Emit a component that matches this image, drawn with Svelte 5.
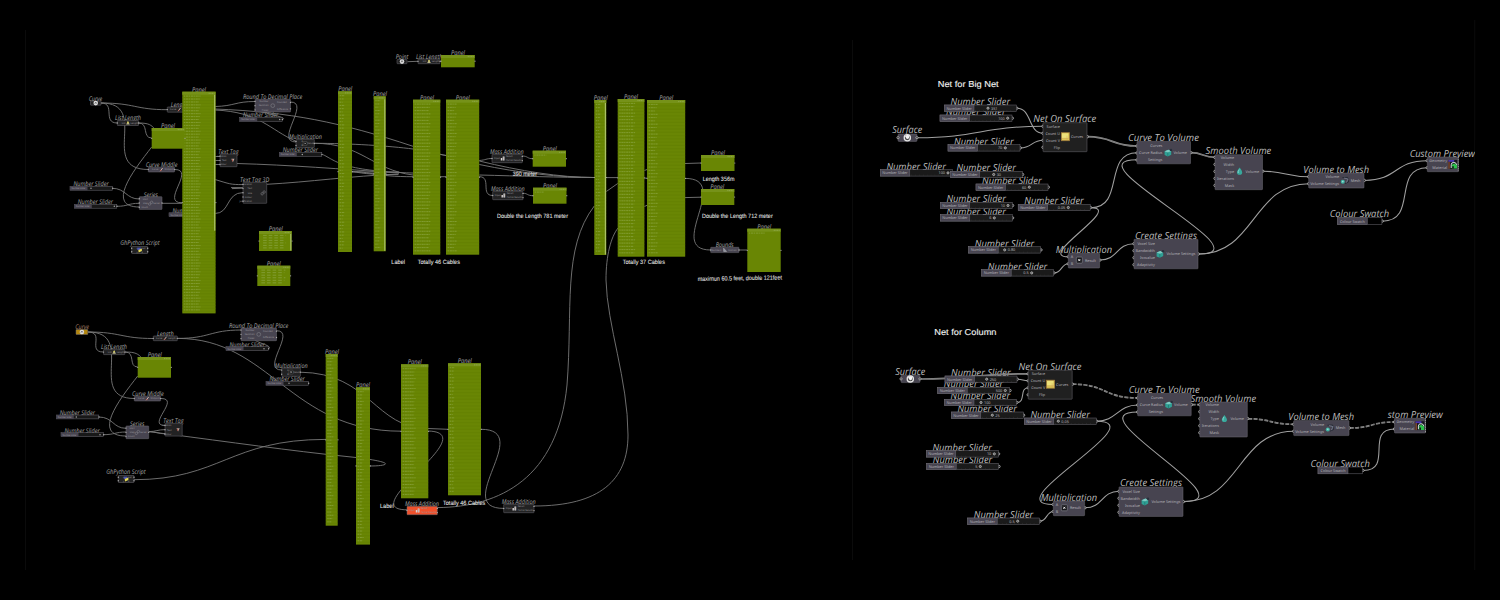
<script>
	const GREY = '#474450'
	const DARK = '#222223'
	const GREEN = '#698604'

	// ---- left canvas: small components ----
	// x, y, w, h, title, title x, title width, inputs, outputs, icon
	const parts = [
		{ x: 90.5, y: 101, w: 10.5, h: 4.2, t: 'Curve', tx: 88.7, tw: 13.6, icon: 'hex', fill: DARK },
		{ x: 117.3, y: 120.5, w: 21.3, h: 5, t: 'List Length', tx: 115, tw: 26, ins: ['List'], outs: ['Length'], icon: 'tree', fill: DARK },
		{ x: 167.3, y: 107, w: 24, h: 5.2, t: 'Length', tx: 170.7, tw: 17, ins: ['Curve'], outs: ['Length'], icon: 'pen', fill: DARK },
		{ x: 148.3, y: 167.2, w: 26.3, h: 4.8, t: 'Curve Middle', tx: 145.7, tw: 31.7, ins: ['Curve'], outs: ['Midpoint'], icon: 'pen', fill: GREY },
		{ x: 139.3, y: 196.7, w: 22.7, h: 12.7, t: 'Series', tx: 143.7, tw: 14.3, ins: ['Start', 'Step', 'Count'], outs: ['Series'], icon: 'links', fill: GREY },
		{ x: 131.7, y: 246.5, w: 16, h: 7, t: 'GhPython Script', tx: 120.3, tw: 39.3, ins: ['x', 'y'], outs: ['out', 'a'], icon: 'python', fill: DARK, dy: -1.5 },
		{ x: 255, y: 99.3, w: 35.5, h: 12.7, t: 'Round To Decimal Place', tx: 243, tw: 59.3, ins: ['Number', 'Decimals', 'Places'], outs: ['Rounded', 'Difference'], icon: 'ring', fill: GREY },
		{ x: 220, y: 154, w: 17, h: 12.7, t: 'Text Tag', tx: 218.3, tw: 20.3, ins: ['Location', 'Text', 'Colour'], icon: 'tag', fill: DARK },
		{ x: 296, y: 139.3, w: 18.3, h: 8.3, t: 'Multiplication', tx: 289, tw: 33, ins: ['A', 'B'], outs: ['Result'], icon: 'cross', fill: DARK },
		{ x: 243, y: 182.3, w: 23.7, h: 21, t: 'Text Tag 3D', tx: 240, tw: 29.3, ins: ['Location', 'Text', 'Size', 'Colour', 'Justification'], icon: 'links', fill: DARK },
		{ x: 397, y: 59.5, w: 10, h: 4.2, t: 'Point', tx: 395.7, tw: 12.7, icon: 'hex', fill: DARK },
		{ x: 418, y: 59, w: 22, h: 4.7, t: 'List Length', tx: 416, tw: 26.5, ins: ['List'], outs: ['Length'], icon: 'tree', fill: DARK },
		{ x: 492, y: 154.3, w: 30.3, h: 8.4, t: 'Mass Addition', tx: 490, tw: 33.7, ins: ['Input'], outs: ['Result', 'Partial Results'], icon: 'sum', fill: DARK },
		{ x: 492.7, y: 191.3, w: 30.3, h: 8.4, t: 'Mass Addition', tx: 491, tw: 33.7, ins: ['Input'], outs: ['Result', 'Partial Results'], icon: 'sum', fill: DARK },
		{ x: 710.7, y: 247.3, w: 28.3, h: 5.3, t: 'Bounds', tx: 715.7, tw: 18, ins: ['Numbers'], outs: ['Domain'], icon: 'tri', fill: GREY },
		{ x: 76, y: 329.5, w: 11.8, h: 5, t: 'Curve', tx: 75.3, tw: 13.7, icon: 'hex', fill: '#b3860e', tc: '#a9806a' },
		{ x: 153.3, y: 336, w: 24, h: 4.7, t: 'Length', tx: 157, tw: 16.7, ins: ['Curve'], outs: ['Length'], icon: 'pen', fill: DARK },
		{ x: 103.5, y: 349.6, w: 21.3, h: 5, t: 'List Length', tx: 101, tw: 26, ins: ['List'], outs: ['Length'], icon: 'tree', fill: DARK },
		{ x: 134.3, y: 396.2, w: 26.3, h: 4.8, t: 'Curve Middle', tx: 132, tw: 31.7, ins: ['Curve'], outs: ['Midpoint'], icon: 'pen', fill: GREY },
		{ x: 126, y: 426, w: 22.7, h: 12.7, t: 'Series', tx: 130, tw: 14.3, ins: ['Start', 'Step', 'Count'], outs: ['Series'], icon: 'links', fill: GREY },
		{ x: 165, y: 423.4, w: 17.2, h: 12.7, t: 'Text Tag', tx: 163.3, tw: 20.3, ins: ['Location', 'Text', 'Colour'], icon: 'tag', fill: DARK },
		{ x: 118.3, y: 475.5, w: 15.7, h: 7, t: 'GhPython Script', tx: 106.3, tw: 39.3, ins: ['x', 'y'], outs: ['out', 'a'], icon: 'python', fill: DARK, dy: -1.5 },
		{ x: 241, y: 328, w: 35.5, h: 12.7, t: 'Round To Decimal Place', tx: 229, tw: 59.3, ins: ['Number', 'Decimals', 'Places'], outs: ['Rounded', 'Difference'], icon: 'ring', fill: GREY },
		{ x: 281.7, y: 368, w: 18.7, h: 8.3, t: 'Multiplication', tx: 274.7, tw: 33, ins: ['A', 'B'], outs: ['Result'], icon: 'cross', fill: DARK },
		{ x: 407, y: 506.3, w: 30.3, h: 8.4, t: 'Mass Addition', tx: 405, tw: 34, ins: ['Input'], outs: ['Result', 'Partial Results'], icon: 'sum', fill: '#f0512c' },
		{ x: 503.7, y: 504.3, w: 30.3, h: 8.4, t: 'Mass Addition', tx: 501.7, tw: 34, ins: ['Input'], outs: ['Result', 'Partial Results'], icon: 'sum', fill: DARK }
	]

	const miniSliders = [
		[70, 186.3, 21], [74.3, 204.3, 40], [169, 212.8, 20], [239.7, 117.5, 40], [279.3, 152.5, 23],
		[56.3, 415, 20], [61, 432.7, 39], [226, 346.7, 38], [266, 381.3, 23]
	]

	// x, y, w, h, title x, rows, row text width, scroll bar
	const panels = [
		[182.3, 91.7, 33.3, 221.7, 192, 74, 17, true],
		[151.7, 128, 33, 20.7, 161, 0, 0],
		[259, 231, 32.7, 20, 268.7, 6, 23, true],
		[257.3, 265.7, 33, 20.3, 266.7, 6, 24],
		[441, 55, 33.7, 12.3, 451, 0, 0],
		[338, 91.3, 14, 160.7, 338.3, 48, 5],
		[373.7, 96.3, 12, 155, 373, 46, 5, true],
		[413, 99.7, 27.3, 155, 420, 46, 16],
		[446, 99.7, 33.2, 155, 455.7, 46, 9],
		[532.7, 150.7, 33.3, 16, 542.7, 1, 12],
		[533, 187.7, 33.5, 16, 543, 1, 9],
		[594.3, 100, 12, 155, 593.7, 46, 5, true],
		[617.7, 99, 26.7, 157.7, 624, 47, 16],
		[647, 100, 38.2, 156.7, 659.3, 46, 9],
		[701, 155, 33.5, 16, 711, 0, 0],
		[701, 189, 33.3, 16, 710.3, 0, 0],
		[747.3, 228.7, 33.4, 43.3, 757.3, 1, 16],
		[137.7, 357, 33.3, 20.7, 147.7, 0, 0],
		[325.7, 354, 12, 171.7, 325, 51, 6],
		[356, 387.3, 14, 157.3, 356, 47, 6],
		[401, 364.3, 27.3, 134, 407.7, 39, 13],
		[448, 363.3, 33, 132, 457.7, 38, 5]
	]

	const notes = [
		['390 meter', 512.7, 176.3, 24.3],
		['Double the Length 781 meter', 497, 217.8, 71],
		['Label', 391.3, 263.5, 13.7],
		['Totally 46 Cables', 417.7, 263.5, 42.3],
		['Totally 37 Cables', 622.7, 264.4, 42.3],
		['Length 356m', 702.7, 180.7, 31.8],
		['Double the Length 712 meter', 702, 218, 70.7],
		['Label', 380, 507.6, 13.7],
		['Totally 46 Cables', 443, 505.2, 42.3]
	]

	const leftWires = [
		'M101 103 C135 103 135 109.7 167.3 109.7',
		'M101 103 C116 103 102 123 117.3 123',
		'M101 103 C151 103 98 169.5 148.3 169.5',
		'M138.7 123 C149 123 142 138 151.7 138',
		'M138.7 123 C149 123 151 125 155 129',
		'M151.7 147 C138 165 103 207 139.3 207',
		'M112 188.3 C126 188.3 126 199 139.3 199',
		'M117 206.3 C128 206.3 128 203.3 139.3 203.3',
		'M174.7 169.5 C196 169.5 160 202.8 182 202.8',
		'M215 106.5 C235 106 235 101.5 255 101.5',
		'M215 110 C260 112 270 130 296 141.3',
		'M215 109 C290 112 340 122 413 146.3 C432 152 440 154.5 446 155.5',
		'M290.5 102 C311 102 274 142 296 142',
		'M282.5 119.5 C290 117 254 112 255 108.5',
		'M314.3 143.3 C350 143.3 390 146 413 149 L446 155.5',
		'M314.3 143.3 C362 143.3 372 170 413 175',
		'M322.5 154.4 C335 160 340 171 413 173',
		'M162 203.3 L182 203.3 M237 163.5 C290 165 340 169 399 173',
		'M266.7 184.3 C310 182 350 176 399 174',
		'M352 171.5 C370 171.5 375 176.7 413 176.7',
		'M352 172 L399 172 M352 171.4 C365 174 375 174.6 398 174.6',
		'M215 179.5 C230 184 230 184.6 243 184.6',
		'M231 187.6 L243 187.6 M232 188.6 L243 188.2',
		'M215 213.5 C230 213.5 226 192.6 243 192.6',
		'M215 156.5 H220 M215 160.5 H220 M215 164.5 H220',
		'M407.5 61.7 L418 61.3 M440 61.3 H441',
		'M440 176.7 H446',
		'M479.3 160.5 C486 160 486 158.5 492 158.5',
		'M479.3 161 C520 171 560 177.5 594.3 177.5',
		'M479.3 164.5 C520 173 560 177.5 594.3 177.5',
		'M479.3 175 C520 176 560 177.5 594.3 177.5',
		'M479.3 176.7 C492 176.7 480 195.5 492.7 195.5',
		'M522.3 156 C528 156 527 158.7 532.7 158.7',
		'M523 193.3 C528 193.3 527 195.7 533 195.7',
		'M606.3 177.6 H617.7 M644.4 178.2 H647 M644.4 170.5 L647 169.5 M644.4 206.5 L647 205.3',
		'M606.3 191.5 L617.7 183.5',
		'M685 163.5 L701 163 M685 197.6 L701 197.2',
		'M685 178.4 C733 178.4 665 250 710.7 250',
		'M739 250 H747',
		'M437.3 507.6 C500 507 558 478 567 385 C573 310 562 248 594.3 206',
		'M534 506 C600 506 628 480 628 435 C628 380 607 325 606 280 C606 255 611 237 618 228',
		'M88 332 C121 332 121 338.5 153.3 338.5',
		'M88 332 C105 332 87 352 103.3 352',
		'M88 332 C137 332 86 398.5 134.3 398.5',
		'M125 352 C136 352 128 367 137.7 367',
		'M125 352 C136 352 138 354 142 358',
		'M137.7 376 C124 394 89 436 126 436',
		'M98.7 417 C113 417 113 428.3 126 428.3',
		'M103 434.7 C115 434.7 115 432 126 432',
		'M161 398.5 C181 398.5 146 425.5 165 425.5',
		'M148.7 431.6 C156 431.6 158 429.6 165 429.6',
		'M148.7 431.6 C156 431.6 158 433.8 165 433.8',
		'M148.7 431.6 C200 438 270 448 325 454.2 L356 457.5 C400 463 386 466 370 466',
		'M134 479.7 C220 479.7 230 439.4 325.7 439.4',
		'M177.7 338.4 C210 338.4 210 330 241 330',
		'M177.7 338.4 C270 338.4 290 431.2 401 431.2',
		'M276.5 330.7 C297 330.7 260 370 281.7 370',
		'M268.5 348.5 C274 346 254 342 254 339',
		'M300.3 372.2 C370 373 375 428.5 428 428.5 L448 429.3',
		'M428.3 431 C485 433 353 509.8 407 509.8',
		'M481 429.3 C535 429.3 451 508.4 503.7 508.4'
	]

	// ---- right canvas ----
	// x, y, grip x, value, value on the right of the grip
	const sliders = [
		[940, 115, 1007.7, '100'], [944.5, 105, 988, '351', true],
		[948, 144.7, 1005.3, '70'], [976, 184, 1029.3, '60'], [880.3, 169.7, 948, '100'],
		[950.3, 171.3, 993.7, '30', true], [940.3, 214.7, 994.3, '6'],
		[940.3, 202.3, 1008, '10'], [1018.2, 204.3, 1068.3, '0.05'],
		[968.7, 246.7, 1004.7, '0.80', true], [981.7, 269.7, 1031.7, '0.5'],
		[951.3, 412, 992.3, '25', true], [944.5, 399.3, 981, '100', true],
		[937.7, 387.3, 1005.3, '500'], [945, 376, 986.7, '250', true],
		[1024.3, 418, 1058.3, '0.05', true], [926.7, 463.3, 980.3, '5'],
		[926.3, 450.7, 994.3, '10'], [967.7, 518, 1017.7, '0.5']
	]

	// ins end at inX, the output starts at outX, first port sits p0 below the top
	const kinds = {
		net: { w: 44, h: 29, t: 'Net On Surface', dx: -9.7, tw: 63, ins: ['Surface', 'Count U', 'Count V', 'Flip'], p0: 3.6, inX: 17, out: 'Curves', outX: 27.9, oy: 14, icon: 'grid', ix: 22.4, fill: '#202020' },
		ctv: { w: 53.5, h: 22.5, t: 'Curve To Volume', dx: -9, tw: 71, ins: ['Curves', 'Curve Radius', 'Settings'], p0: 4.7, inX: 25.4, out: 'Volume', outX: 36.4, oy: 11.4, icon: 'cube', ix: 31, fill: GREY },
		smooth: { w: 47.5, h: 35, t: 'Smooth Volume', dx: -9.4, tw: 65.7, ins: ['Volume', 'Width', 'Type', 'Iterations', 'Mask'], p0: 2.7, inX: 19.2, out: 'Volume', outX: 30.6, oy: 16.5, icon: 'drop', ix: 24.6, fill: GREY },
		create: { w: 64, h: 29.5, t: 'Create Settings', dx: 1, tw: 62, ins: ['Voxel Size', 'Bandwidth', 'Isovalue', 'Adaptivity'], p0: 4.4, inX: 20.9, out: 'Volume Settings', outX: 32.4, oy: 14.7, icon: 'cube', ix: 26, fill: GREY },
		mult: { w: 31.3, h: 14.7, t: 'Multiplication', dx: -12.6, tw: 56.3, ins: ['A', 'B'], p0: 3.5, inX: 5, out: 'Result', outX: 16.6, oy: 6.8, icon: 'times', ix: 11, fill: GREY },
		mesh: { w: 55.3, h: 15, t: 'Volume to Mesh', dx: -5.4, tw: 65.7, ins: ['Volume', 'Volume Settings'], p0: 3.7, inX: 30.4, out: 'Mesh', outX: 42, oy: 7.4, icon: 'mesh', ix: 36.3, fill: GREY },
		preview: { w: 31, h: 14.7, t: 'Custom Preview', dx: -17.6, tw: 65.3, ins: ['Geometry', 'Material'], p0: 3.7, inX: 19.8, icon: 'paint', ix: 25.5, fill: GREY }
	}

	const nodes = [
		{ k: 'net', x: 1043, y: 122.7 }, { k: 'smooth', x: 1215, y: 154.7 },
		{ k: 'ctv', x: 1137, y: 141.3 }, { k: 'create', x: 1134, y: 239.3 },
		{ k: 'mult', x: 1068.3, y: 253.3 }, { k: 'mesh', x: 1308.7, y: 173 },
		{ k: 'preview', x: 1427.3, y: 157 },
		{ k: 'net', x: 1028.2, y: 370.2 }, { k: 'smooth', x: 1199.8, y: 402 },
		{ k: 'ctv', x: 1137.7, y: 393.3 }, { k: 'create', x: 1119, y: 486.9 },
		{ k: 'mult', x: 1053.3, y: 501 }, { k: 'mesh', x: 1293.7, y: 420.6 },
		{ k: 'preview', x: 1394.5, y: 418.3, t: 'stom Preview', dx: -6.8, tw: 55 }
	].map(n => ({ ...kinds[n.k], ...n }))

	const surfaces = [[898, 134], [901, 375.2]]
	const swatches = [[1337.3, 217.7], [1318, 467]]

	// start, end, horizontal pull, style
	const rightWires = [
		[1017, 108.3, 1043, 133.3, 15], [917.5, 137.7, 1043, 126.3, 60], [1020.5, 148, 1043, 140.3, 11],
		[1091, 207.7, 1137, 152.7, 34], [1091, 207.7, 1068.3, 256.8, 33], [1054.5, 273, 1068.3, 263.8, 7],
		[1100, 260, 1134, 243.7, 18], [1199, 254, 1137, 159.7, 70], [1199, 254, 1308.7, 183.7, 56],
		[1087.5, 136.7, 1137, 146, 26, 'fat'], [1191, 152.7, 1215, 157.4, 12, 'fat'],
		[1263, 171.2, 1308.7, 176.7, 22], [1364.5, 180.4, 1427.3, 160.7, 34], [1382.5, 221.2, 1427.3, 167.7, 36],
		[920.5, 379, 1028.2, 373.8, 50, 'fat'], [1017.5, 379.3, 1028.2, 380.8, 6], [1017, 402.5, 1028.2, 387.8, 9],
		[1096.5, 421.3, 1137.7, 405, 20], [1096.5, 421.3, 1053.3, 504.5, 60], [1040, 521.3, 1053.3, 511.5, 7],
		[1085, 507.8, 1119, 491.3, 18], [1184, 501.6, 1137.7, 412, 66], [1184, 501.6, 1293.7, 431.3, 56],
		[1072.5, 384.2, 1137.7, 398, 34, 'dash'], [1191.7, 404.7, 1199.8, 404.7, 3, 'dash'],
		[1248, 418.8, 1293.7, 424.3, 22, 'dash'], [1349.5, 428, 1394.5, 422, 24, 'dash'],
		[1363.5, 470.5, 1394.5, 429, 30]
	]

	const curve = ([x1, y1, x2, y2, c]) => `M${x1} ${y1} C${x1 + c} ${y1} ${x2 - c} ${y2} ${x2} ${y2}`

	// y of the i-th of n ports spread over the height of a part
	const spread = (p, i, n) => p.y + (p.h * (i + 0.5)) / n
</script>

{#snippet icon(name, x, y)}
	<g transform="translate({x} {y})">
		{#if name === 'hex'}
			<circle r="2.3" fill="#ddd" />
			<path d="M-1 0.8 L0 -1 L1 0.6" stroke="#444" stroke-width=".6" fill="none" />
		{:else if name === 'tree'}
			<path d="M-1.8 1.6 L0 -2 L1.8 1.6z" fill="#b9b58a" />
			<circle cy="-.6" r=".8" fill="#d8cf50" />
		{:else if name === 'pen'}
			<path d="M-1.3 1.6 L1.2 -1.6" stroke="#c9b2a8" stroke-width="1" />
			<circle cx="-.6" cy="1" r=".6" fill="#b5483c" />
		{:else if name === 'links'}
			<circle cx="-1" cy="1" r="1.2" class="line" />
			<circle cx="1" cy="-.8" r="1.2" class="line" />
		{:else if name === 'python'}
			<path d="M-2.4 -2.4 H1.2 V0 H-2.4z" fill="#4a53b0" />
			<path d="M-1.4 0 L2.2 -1.6 V1.1 L-1 2.4z" fill="#e8dc58" />
		{:else if name === 'ring'}
			<circle r="1.9" class="line" />
		{:else if name === 'tag'}
			<path d="M-1.6 -1.6 H1.6 L0 1.8z" fill="#b9aaa4" />
			<path d="M-.5 -1 V1" stroke="#b2402f" stroke-width=".8" />
		{:else if name === 'cross'}
			<rect x="-2" y="-2" width="4" height="4" rx=".6" fill="#111" stroke="#777" stroke-width=".4" />
			<path d="M-.8 -.8 L.8 .8 M.8 -.8 L-.8 .8" stroke="#ddd" stroke-width=".5" />
		{:else if name === 'sum'}
			<path d="M-1.8 1.9 V-.4 H-.4 V1.9z M.1 1.9 V-2 H1.9 V1.9z" fill="#d8d4d4" />
			<path d="M.6 -.8 H1.5 M.6 .6 H1.5" stroke="#555" stroke-width=".4" />
		{:else if name === 'tri'}
			<path d="M-1.2 -1.8 V1.5 H1.8z" fill="#8d93a3" stroke="#bbb" stroke-width=".5" />
		{:else if name === 'grid'}
			<rect x="-4" y="-4" width="8" height="8" fill="#dcc756" stroke="#a07c3c" stroke-width=".8" />
			<rect x="-3.5" y="-3.3" width="6.2" height="4.6" fill="#ece07a" />
			<path d="M-3.6 1.6 H3.6 M1.6 -1 V3.6" stroke="#cf9a58" stroke-width=".4" />
		{:else if name === 'cube'}
			<path d="M-3.4 -1.4 L.4 -3 L3.2 -1.6 V2 L-.2 3.8 L-3.4 2.4z" fill="#2fa095" />
			<path d="M-3.4 -1.4 L-.2 -.2 L3.2 -1.6 L.4 -3z" fill="#7fcac2" />
			<path d="M-.2 -.2 V3.8" stroke="#1f6b67" stroke-width=".6" />
			<circle cx="3" cy="-2.8" r="1.2" fill="#28303c" />
		{:else if name === 'drop'}
			<path d="M0 -3.6 C1.2 -1.6 2.6 -.4 2.6 1.2 A2.6 2.4 0 0 1 -2.6 1.2 C-2.6 -.4 -1.2 -1.6 0 -3.6z" fill="#38a89c" />
			<path d="M-.4 -1.6 C-1.4 0 -1.6 .6 -1.2 1.8" stroke="#9be0d8" stroke-width=".8" fill="none" />
		{:else if name === 'times'}
			<rect x="-3" y="-3" width="6" height="6" rx=".8" fill="#16161a" stroke="#8a8a92" stroke-width=".6" />
			<path d="M-1 -1 L1 1 M1 -1 L-1 1" stroke="#fff" stroke-width=".9" />
		{:else if name === 'mesh'}
			<path d="M-2.6 -2.8 L2.6 -3 L3.6 1.6 L0 3.2" fill="none" stroke="#20242e" stroke-width=".8" />
			<path d="M-1 -2.4 L3 -1.4 L1.4 2.2" fill="none" stroke="#8d98ad" stroke-width=".6" />
			<circle cx="-2.2" cy="1.4" r="2" fill="#3fb3a4" />
			<circle cx="-2.2" cy="1.2" r=".8" fill="#a9e0d8" />
		{:else if name === 'paint'}
			<rect x="-4.4" y="-4.4" width="8.8" height="8.8" fill="#17141f" />
			<rect x="-4.4" y="-4.4" width="5.8" height="1.8" fill="#4a34b4" />
			<rect x="-4.4" y="-2.6" width="1.3" height="7" fill="#8a4d2c" />
			<path d="M-1.6 3.6 V.4 Q-1.6 -2 1 -2 Q3.8 -2 3.8 1" fill="none" stroke="#d6ece0" stroke-width="1" />
			<path d="M-.8 4.2 V.4 L1.2 -1 L4.2 .8 V4.2z" fill="#2cc24b" />
			<rect x="-.6" y="1.8" width="1.6" height="2.4" fill="#14161c" />
		{/if}
	</g>
{/snippet}

{#snippet title(text, x, y, width, small, colour)}
	<text class={small ? 'title small' : 'title'} {x} {y} textLength={width} lengthAdjust="spacingAndGlyphs" fill={colour ?? (small ? '#a9a9a9' : '#bdbdbd')}>{text}</text>
{/snippet}

<div class="canvas">
	<svg viewBox="0 0 1500 600" width="1500" height="600">
		<path class="edge" d="M25.5 30 V570 M852.5 40 V560 M1474.7 20 V570" />

		<!-- titles go first, the bodies below cut off their descenders -->
		{#each parts as p}
			{@render title(p.t, p.tx, p.y - 0.2 + (p.dy ?? 0), p.tw, true, p.tc)}
		{/each}
		{#each miniSliders as [x, y]}
			{@render title('Number Slider', x + 3.4, y - 0.2, 35.2, true)}
		{/each}
		{#each nodes as n}
			{@render title(n.t, n.x + n.dx, n.y - 0.5, n.tw)}
		{/each}
		{#each sliders as [x, y]}
			{@render title('Number Slider', x + 6.1, y - 0.2, 59.5)}
		{/each}
		{#each surfaces as [x, y]}
			{@render title('Surface', x - 5.7, y - 0.6, 30)}
		{/each}
		{#each swatches as [x, y]}
			{@render title('Colour Swatch', x - 7.5, y - 0.3, 59.3)}
		{/each}

		<g class="wires">
			{#each leftWires as d}
				<path {d} />
			{/each}
		</g>
		<g class="wires right">
			{#each rightWires as w}
				<path class={w[5]} d={curve(w)} />
				{#if w[5]}
					<path class="core" d={curve(w)} />
				{/if}
			{/each}
		</g>

		<!-- left canvas -->
		{#each parts as p}
			<rect class="body" x={p.x} y={p.y} width={p.w} height={p.h} rx=".5" fill={p.fill} />
			{#each p.ins ?? [] as label, i}
				<circle class="port" cx={p.x} cy={spread(p, i, p.ins.length)} r=".7" />
				<text class="tiny" x={p.x + p.w * (p.icon === 'sum' ? 0.26 : 0.38)} y={spread(p, i, p.ins.length) + 0.8} text-anchor="end">{label}</text>
			{/each}
			{#each p.outs ?? [] as label, i}
				<circle class="port" cx={p.x + p.w} cy={spread(p, i, p.outs.length)} r=".7" />
				<text class="tiny" x={p.x + p.w * (p.icon === 'sum' ? 0.46 : 0.62)} y={spread(p, i, p.outs.length) + 0.8}>{label}</text>
			{/each}
			{@render icon(p.icon, p.x + p.w * (p.icon === 'sum' ? 0.35 : p.icon === 'tag' ? 0.76 : p.icon === 'links' && p.h > 15 ? 0.85 : 0.5), p.y + p.h / 2)}
		{/each}

		{#each miniSliders as [x, y, grip]}
			<rect class="body" {x} {y} width="42.5" height="3.9" fill="#181818" />
			<rect {x} {y} width="17.5" height="3.9" fill={GREY} />
			<text class="tiny" x={x + 1.5} y={y + 2.8} textLength="14">Number Slider</text>
			<circle cx={x + grip} cy={y + 2} r=".7" fill="#aaa" />
			<circle class="port" cx={x + 42.7} cy={y + 2} r=".7" />
		{/each}

		{#each panels as [x, y, w, h, tx, rows, rowWidth, bar]}
			<text class="title small" x={tx} {y} dy="-.2" textLength="14" lengthAdjust="spacingAndGlyphs" fill="#a9a9a9">Panel</text>
			<rect {x} {y} width={w} height={h} fill={GREEN} />
			<rect {x} {y} width={w} height="3" fill="#769219" />
			<path class="head" d="M{x + w - Math.min(7, w - 3)} {y + 1.6} H{x + w - 1}" />
			{#each { length: rows } as _, i}
				{@const ry = y + 4.4 + (i * (h - 5)) / Math.max(rows, 5)}
				{#if rows > 10}
					<path class="rule" d="M{x} {ry + 1.5} H{x + w}" />
				{/if}
				<path class="row" class:wide={rows === 6} d="M{x + 1.6} {ry} h{rowWidth - ((i * 7) % 3)}" transform={rows === 6 ? 'translate(2.5 0)' : null} />
			{/each}
			{#if bar}
				<rect x={x + w - 1.5} y={y + 3} width="1.2" height={h > 200 ? 136 : h - 3.5} fill="#a9bf66" />
			{/if}
			<circle class="port" cx={x} cy={y + h / 2} r=".6" />
			<circle class="port" cx={x + w + 0.3} cy={y + h / 2} r=".6" />
		{/each}

		{#each notes as [text, x, y, width]}
			<text class="note" {x} {y} textLength={width} lengthAdjust="spacingAndGlyphs">{text}</text>
		{/each}
		<text class="note" x="697.7" y="281" textLength="84.3" lengthAdjust="spacingAndGlyphs" transform="rotate(-1 697.7 281)">maximun 60.5 feet, double 121feet</text>

		<!-- right canvas -->
		<text class="heading" x="937.7" y="87" textLength="61" lengthAdjust="spacingAndGlyphs">Net for Big Net</text>
		<text class="heading" x="934.3" y="334.6" textLength="62.2" lengthAdjust="spacingAndGlyphs">Net for Column</text>

		{#each surfaces as [x, y]}
			<rect class="body" {x} {y} width="19" height="7.4" rx="1" fill={GREY} />
			<circle class="port big" cx={x} cy={y + 3.7} r="1.1" />
			<circle class="port big" cx={x + 19} cy={y + 3.7} r="1.1" />
			<circle cx={x + 9.3} cy={y + 3.7} r="3.1" fill="#3a3a3a" stroke="#e4e4e4" stroke-width="1.3" />
			<path d="M{x + 7} {y + 2.4} l2 -1.6 l2.4 .8 l-.4 2.6 l-2 1z" fill="#f2f2f2" />
		{/each}

		{#each nodes as n}
			{#each n.ins as label, i}
				<circle class="port big" cx={n.x} cy={n.y + n.p0 + i * 7} r="1.2" />
			{/each}
			{#if n.out}
				<circle class="port big" cx={n.x + n.w + 0.3} cy={n.y + n.oy} r="1.2" />
			{/if}
			<rect class="body" x={n.x} y={n.y} width={n.w} height={n.h} rx=".6" fill={n.fill} />
			{#each n.ins as label, i}
				<text class="label" x={n.x + n.inX} y={n.y + n.p0 + i * 7 + 1.4} text-anchor="end">{label}</text>
			{/each}
			{#if n.out}
				<text class="label" x={n.x + n.outX} y={n.y + n.oy + 1.4}>{n.out}</text>
			{:else}
				<path class="torn" d="M{n.x + n.w} {n.y} V{n.y + n.h}" />
			{/if}
			{@render icon(n.icon, n.x + n.ix, n.y + (n.oy ?? 7.4))}
		{/each}

		{#each sliders as [x, y, grip, value, after]}
			<circle class="port big" cx={x + 72.3} cy={y + 3.2} r="1.2" />
			<rect class="body" {x} {y} width="72" height="6.4" fill="#1a1a1a" />
			<rect class="body" {x} {y} width="29.5" height="6.4" fill={GREY} />
			<text class="label" x={x + 2} y={y + 4.6} textLength="25.3">Number Slider</text>
			<path class="ticks" d="M{x + 31} {y + 5.4} H{x + 70}" />
			<circle cx={grip} cy={y + 3.2} r="1.1" fill="#555" stroke="#ccc" stroke-width=".7" />
			<text class="label" x={after ? grip + 3 : grip - 3} y={y + 4.6} text-anchor={after ? 'start' : 'end'}>{value}</text>
		{/each}

		{#each swatches as [x, y]}
			<circle class="port big" cx={x + 44.9} cy={y + 3.4} r="1.2" />
			<rect class="body" {x} {y} width="44.6" height="6.8" fill="#000" />
			<rect class="body" {x} {y} width="30" height="6.8" fill={GREY} />
			<text class="label" x={x + 2.6} y={y + 4.8} textLength="25">Colour Swatch</text>
		{/each}

		<rect x="1475" y="140" width="25" height="30" fill="#000" />
	</svg>
</div>

<style>
	:global(body) {
		background: #000;
		overflow: hidden;
	}

	.canvas {
		width: 1500px;
		height: 600px;
		background: #000;
	}

	svg {
		display: block;
		text-rendering: geometricPrecision;
	}

	.edge {
		stroke: #0b0b0b;
		stroke-width: 1;
	}

	.title {
		font: italic 9.8px "Open Sans", "Noto Sans", sans-serif;
	}

	.title.small {
		font-size: 6.5px;
	}

	.label {
		font: 3.8px "Noto Sans", "Open Sans", sans-serif;
		fill: #b0aeb4;
	}

	.tiny {
		font: 2.3px "Noto Sans", "Open Sans", sans-serif;
		fill: #98969c;
	}

	.note {
		font: 6.2px "Liberation Sans", Arial, sans-serif;
		fill: #dedede;
		stroke: #dedede;
		stroke-width: .12;
	}

	.heading {
		font: 8.6px "Liberation Sans", Arial, sans-serif;
		fill: #f0f0f0;
		stroke: #f0f0f0;
		stroke-width: .12;
	}

	.wires path {
		fill: none;
		stroke: #787878;
		stroke-width: .9;
	}

	.wires.right path {
		stroke: #a0a0a0;
		stroke-width: 1.05;
	}

	/* list wires are doubled, tree wires are doubled and dashed */
	.wires.right .fat {
		stroke: #9a9a9a;
		stroke-width: 1.7;
	}

	.wires.right .dash {
		stroke: #9a9a9a;
		stroke-width: 1.7;
		stroke-dasharray: 4 1.4;
	}

	.wires.right .core {
		stroke: #3c3c3c;
		stroke-width: .4;
	}

	.body {
		stroke: #6c6a73;
		stroke-width: .5;
	}

	.port {
		fill: #aaa;
	}

	.port.big {
		fill: #111;
		stroke: #d0d0d0;
		stroke-width: .7;
	}

	.line {
		fill: none;
		stroke: #8a8a90;
		stroke-width: .5;
	}

	.head {
		stroke: #9ab05a;
		stroke-width: .7;
		stroke-dasharray: 1.2 .5;
	}

	.rule {
		stroke: #5f7b02;
		stroke-width: .4;
	}

	.row {
		stroke: #88a23e;
		stroke-width: .8;
		stroke-dasharray: 1.4 .7 2.2 .5;
	}

	.row.wide {
		stroke-dasharray: 3.6 2;
	}

	.ticks {
		stroke: #444;
		stroke-width: .6;
		stroke-dasharray: .5 3.4;
	}

	.torn {
		stroke: #aaa;
		stroke-width: .9;
		stroke-dasharray: 1 .8;
	}
</style>
